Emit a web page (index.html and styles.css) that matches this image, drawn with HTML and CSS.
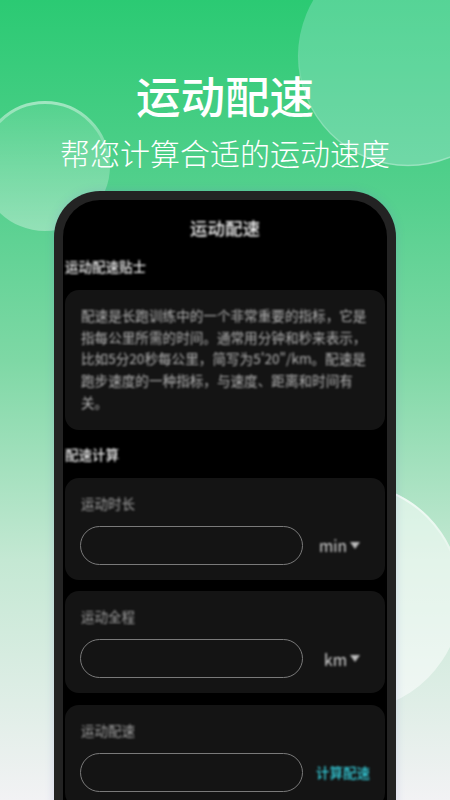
FILE: index.html

```html
<!DOCTYPE html>
<html lang="zh-CN">
<head>
  <meta charset="UTF-8">
  <meta name="viewport" content="width=device-width, initial-scale=1.0">
  <title>运动配速</title>
  <link rel="stylesheet" href="styles.css">
</head>
<body>
  <svg class="bubbles" viewBox="0 0 450 800" width="450" height="800" aria-hidden="true">
    <defs>
      <linearGradient id="fadeLeft" x1="0" y1="0" x2="0" y2="1">
        <stop offset="0" stop-color="#fff" stop-opacity="0.1"/>
        <stop offset="1" stop-color="#fff" stop-opacity="0.34"/>
      </linearGradient>
      <linearGradient id="rimLeft" x1="0" y1="0" x2="0" y2="1">
        <stop offset="0" stop-color="#fff" stop-opacity="0.45"/>
        <stop offset="0.5" stop-color="#fff" stop-opacity="0"/>
      </linearGradient>
      <linearGradient id="rimTop" x1="0" y1="0" x2="0" y2="1">
        <stop offset="0.4" stop-color="#fff" stop-opacity="0"/>
        <stop offset="1" stop-color="#fff" stop-opacity="0.3"/>
      </linearGradient>
      <linearGradient id="rimRight" x1="0" y1="0" x2="0" y2="1">
        <stop offset="0" stop-color="#fff" stop-opacity="0.7"/>
        <stop offset="0.45" stop-color="#fff" stop-opacity="0"/>
      </linearGradient>
    </defs>
    <circle class="bubble-top" cx="408" cy="56" r="110"/>
    <circle cx="408" cy="56" r="109.5" fill="none" stroke="url(#rimTop)" stroke-width="1.5"/>
    <circle cx="45" cy="166" r="65" fill="url(#fadeLeft)"/>
    <circle cx="45" cy="166" r="63.5" fill="none" stroke="url(#rimLeft)" stroke-width="3"/>
    <circle class="bubble-right" cx="347" cy="597" r="114.5"/>
    <circle cx="347" cy="597" r="113.5" fill="none" stroke="url(#rimRight)" stroke-width="2"/>
  </svg>

  <header class="hero">
    <h1>运动配速</h1>
    <p>帮您计算合适的运动速度</p>
  </header>

  <div class="phone">
    <div class="screen">
      <div class="screen-title soft">运动配速</div>

      <div class="section-title soft">运动配速贴士</div>
      <div class="card tips"><div class="soft">配速是长跑训练中的一个非常重要的指标，它是指每公里所需的时间。通常用分钟和秒来表示，比如5分20秒每公里，简写为5'20"/km。配速是跑步速度的一种指标，与速度、距离和时间有关。</div></div>

      <div class="section-title calc-title soft">配速计算</div>
      <div class="card field">
        <div class="label soft">运动时长</div>
        <div class="row">
          <div class="input"></div>
          <div class="unit soft">min<span class="arrow"></span></div>
        </div>
      </div>
      <div class="card field">
        <div class="label soft">运动全程</div>
        <div class="row">
          <div class="input"></div>
          <div class="unit soft">km<span class="arrow"></span></div>
        </div>
      </div>
      <div class="card field">
        <div class="label soft">运动配速</div>
        <div class="row">
          <div class="input"></div>
          <div class="unit action soft">计算配速</div>
        </div>
      </div>
    </div>
  </div>
</body>
</html>
```

FILE: styles.css

```css
* {
  box-sizing: border-box;
}
html, body {
  margin: 0;
  height: 800px;
  overflow: hidden;
}
body {
  position: relative;
  width: 450px;
  font-family: "Noto Sans CJK SC", "Noto Sans", sans-serif;
  background: linear-gradient(to bottom, #2bca73 0%, #55d08e 25%, #7ed8a5 45%, #c4e8d3 70%, #f2f2f4 100%);
}
.bubbles {
  position: absolute;
  left: 0;
  top: 0;
}
.bubble-top {
  fill: #d8f5ff;
  fill-opacity: 0.25;
}
.bubble-right {
  fill: #fff;
  fill-opacity: 0.52;
}
.hero {
  position: relative;
  padding-top: 63px;
  text-align: center;
  color: #fff;
}
.hero h1 {
  margin: 0;
  font-size: 44.5px;
  line-height: 64px;
  font-weight: 500;
}
.hero p {
  margin: 3px 0 0;
  font-size: 30px;
  line-height: 44px;
  font-weight: 300;
}
.phone {
  position: relative;
  width: 342px;
  height: 640px;
  margin: 17px auto 0;
  padding: 9px 9px 0;
  background: #232323;
  border-radius: 46px 46px 0 0;
  box-shadow: 0 0 10px rgba(110, 120, 210, 0.22);
}
.screen {
  height: 100%;
  padding: 0 2px;
  background: #000;
  border-radius: 37px 37px 0 0;
}
.soft {
  filter: blur(0.8px);
}
.screen-title {
  padding-top: 16px;
  font-size: 17.5px;
  line-height: 24px;
  font-weight: 500;
  text-align: center;
  color: #eee;
}
.section-title {
  margin-top: 16px;
  font-size: 13.5px;
  line-height: 20px;
  font-weight: 500;
  color: #eee;
}
.calc-title {
  margin-top: 14px;
}
.card {
  background: #141414;
  border-radius: 14px;
}
.tips {
  margin-top: 14px;
  padding: 15px 16px 16px;
  font-size: 13.6px;
  line-height: 21.7px;
  color: #b4b4b4;
}
.field {
  height: 102px;
  margin-top: 11.7px;
  padding: 14px 15px 0;
}
.calc-title + .field {
  margin-top: 14px;
}
.label {
  padding-left: 1px;
  font-size: 13.5px;
  line-height: 22px;
  color: #a0a0a0;
}
.row {
  display: flex;
  align-items: center;
  margin-top: 12px;
}
.input {
  width: 223px;
  height: 39px;
  border: 1px solid #7a7a7a;
  border-radius: 20px;
  filter: blur(0.3px);
}
.unit {
  display: flex;
  flex: 1;
  align-items: center;
  justify-content: flex-end;
  padding-right: 10px;
  font-size: 15.5px;
  color: #d8d8d8;
}
.arrow {
  width: 0;
  height: 0;
  margin-left: 3px;
  border-left: 5.5px solid transparent;
  border-right: 5.5px solid transparent;
  border-top: 7px solid #bbb;
}
.action {
  padding-right: 0;
  font-size: 13.5px;
  font-weight: 500;
  white-space: nowrap;
  color: #35d0de;
}
```
